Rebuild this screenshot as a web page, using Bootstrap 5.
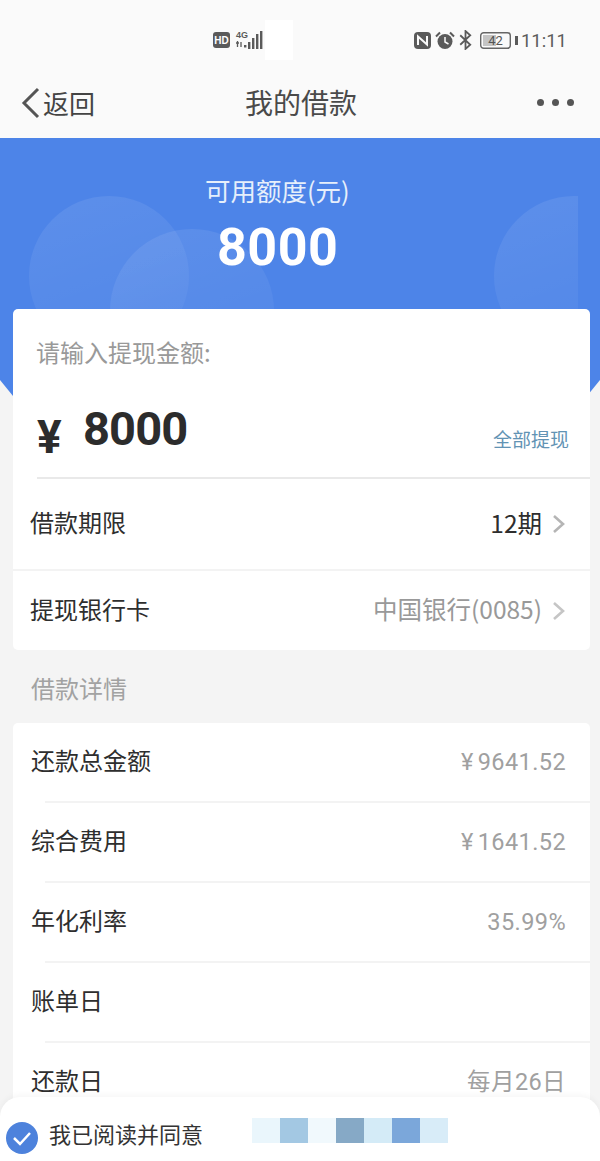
<!DOCTYPE html>
<html lang="zh-CN">
<head>
  <title>我的借款</title>
  <meta charset="utf-8">
  <meta name="viewport" content="width=device-width, initial-scale=1">
  <link href="https://cdn.jsdelivr.net/npm/bootstrap@5.3.2/dist/css/bootstrap.min.css" rel="stylesheet">
  <style>
    html, body { height: 1161px; overflow: hidden; }
    body { background: #f4f4f4; font-family: "Noto Sans CJK SC", "Liberation Sans", sans-serif; color: #2e2e2e; position: relative; }
    .status-line { height: 75px; background: #fafafa; padding: 5px 33px 0 213px; color: #5a5a5a; }
    .status-patch { width: 28px; height: 40px; background: #fff; margin-left: 1px; }
    .status-time { font-family: Roboto, sans-serif; font-size: 18.5px; color: #5c5c5c; margin-left: 3px; padding-top: 3px; }
    .top-nav { height: 63px; background: #fafafa; padding: 0 26px 8px 20px; position: relative; }
    .back-text { font-size: 26px; color: #444; margin-left: 1px; line-height: 1; }
    .nav-title { font-size: 28px; color: #4a4a4a; position: absolute; left: 245px; top: 7px; line-height: 40px; }
    .nav-dot { width: 7px; height: 7px; border-radius: 50%; background: #555; }
    .hero { height: 258px; margin-bottom: -87px; background: #4d84e8; position: relative; overflow: hidden; text-align: center; clip-path: polygon(0 0, 100% 0, 100% 242px, 587px 258px, 13px 258px, 0 242px); }
    .hero-circle { position: absolute; border-radius: 50%; background: linear-gradient(160deg, rgba(255,255,255,.09), rgba(255,255,255,.02)); }
    .hero-label { font-size: 25.5px; color: #e6effb; position: absolute; left: 205px; top: 35px; line-height: 34px; }
    .hero-amount { font-family: Roboto, sans-serif; font-weight: 700; font-size: 52px; color: #fff; position: absolute; left: 217px; top: 79px; line-height: 62px; letter-spacing: .5px; }
    .sheet { margin: 0 10px 0 13px; background: #fff; border-radius: 5px; position: relative; }
    .input-label { font-size: 24px; color: #999; padding: 24px 0 0 23px; line-height: 38px; }
    .amount-line { height: 108px; margin-left: 24px; border-bottom: 2px solid #e9e9e9; padding-right: 21px; position: relative; }
    .yen-big { font-family: Roboto, sans-serif; font-weight: 700; font-size: 46px; color: #2c2c2c; position: absolute; left: 0; top: 41px; line-height: 50px; }
    .amount-big { font-family: Roboto, sans-serif; font-weight: 700; font-size: 47px; color: #2c2c2c; position: absolute; left: 46px; top: 27px; line-height: 62px; letter-spacing: -.9px; }
    .withdraw-all { font-size: 19px; color: #6293b4; margin-top: 53px; line-height: 30px; }
    .form-row { height: 81px; padding: 0 24px 0 17px; font-size: 24px; }
    .form-row-tall { height: 90px; }
    .form-row > span:first-child { padding-bottom: 4px; }
    .form-row + .form-row { border-top: 2px solid #f3f3f3; }
    .row-value { font-size: 24.5px; color: #2e2e2e; margin-right: 2px; padding-bottom: 2px; }
    .row-muted { color: #999; }
    .section-name { font-size: 24px; color: #a2a2a2; margin: 0 0 0 31px; line-height: 76px; height: 73px; }
    .detail-sheet { margin: 0 10px 0 13px; background: #fff; border-radius: 5px; }
    .detail-row { height: 80px; padding: 0 24px 0 18px; position: relative; font-size: 24px; }
    .detail-row > span:first-child { padding-bottom: 6px; }
    .detail-row::after { content: ""; position: absolute; left: 32px; right: 0; bottom: 0; height: 2px; background: #f3f3f3; }
    .detail-row:last-child::after { display: none; }
    .detail-value { font-size: 23.5px; color: #a0a0a0; font-family: Roboto, "Noto Sans CJK SC", sans-serif; letter-spacing: .4px; }
    .detail-value i { font-style: normal; margin-right: 4px; }
    .agree-bar { position: absolute; left: 0; right: 0; bottom: 0; height: 64px; background: #fff; border-radius: 20px 20px 0 0; padding: 12px 0 0 6px; box-shadow: 0 -2px 6px rgba(0,0,0,.04); font-size: 22px; color: #333; }
    .agree-check { margin-top: 6px; }
    .agree-text { margin-left: 11px; margin-right: 49px; padding-bottom: 4px; }
    .blur-box { width: 28px; height: 25px; margin-top: -10px; }
  </style>
</head>
<body>

<div class="status-line d-flex align-items-center">
  <svg width="18" height="16" viewBox="0 0 18 16"><rect width="17" height="16" rx="3" fill="#5a5a5a"/><text x="8.5" y="12" text-anchor="middle" font-family="Liberation Sans" font-weight="700" font-size="10" fill="#fff">HD</text></svg>
  <svg class="ms-1" width="29" height="20" viewBox="0 0 29 20"><text x="1" y="8" font-family="Liberation Sans" font-weight="700" font-size="9" fill="#5a5a5a">4G</text><path d="M1 13h3M2.500 11v6M6 12v5" stroke="#5a5a5a" stroke-width="1.300" fill="none"/><rect x="9" y="15" width="2.400" height="2.500" fill="#5a5a5a"/><rect x="13" y="12" width="2.400" height="7" fill="#5a5a5a"/><rect x="17" y="8" width="2.400" height="11" fill="#5a5a5a"/><rect x="21" y="4" width="2.400" height="15" fill="#5a5a5a"/><rect x="25" y="1" width="2.400" height="18" fill="#5a5a5a"/></svg>
  <div class="status-patch"></div>
  <div class="ms-auto d-flex align-items-center">
    <svg width="17" height="17" viewBox="0 0 17 17"><rect width="17" height="17" rx="4" fill="#5a5a5a"/><path d="M4 13V4.500L13 12.500V4" stroke="#fafafa" stroke-width="2" fill="none"/></svg>
    <svg class="ms-1" width="20" height="19" viewBox="0 0 20 19"><circle cx="10" cy="10.500" r="7.500" fill="#5a5a5a"/><path d="M10 6v5l3.500 2" stroke="#fafafa" stroke-width="1.500" fill="none"/><path d="M1 5.500L5 1.500M19 5.500L15 1.500" stroke="#5a5a5a" stroke-width="2"/></svg>
    <svg class="ms-1" width="13" height="20" viewBox="0 0 12 19"><path d="M1 5l9.500 9-4.500 4V1l4.500 4L1 14" stroke="#5a5a5a" stroke-width="1.700" fill="none"/></svg>
    <div class="d-flex align-items-center ms-2">
      <svg width="31" height="17" viewBox="0 0 31 17"><rect x=".7" y=".7" width="29.600" height="15.600" rx="3" fill="#fafafa" stroke="#666" stroke-width="1.400"/><rect x="3" y="3" width="13" height="11" fill="#c4c4c4"/><text x="15.500" y="13" text-anchor="middle" font-family="Roboto" font-size="13" fill="#555">42</text></svg>
      <svg class="ms-1" width="3" height="9" viewBox="0 0 3 9"><rect width="3" height="9" fill="#5a5a5a"/></svg>
    </div>
    <span class="status-time">11:11</span>
  </div>
</div>

<div class="top-nav d-flex align-items-center">
  <svg width="22" height="32" viewBox="0 0 22 32"><path d="M18 2L4 16l14 14" stroke="#555" stroke-width="3" fill="none"/></svg>
  <span class="back-text">返回</span>
  <span class="nav-title">我的借款</span>
  <div class="ms-auto d-flex gap-2">
    <span class="nav-dot"></span><span class="nav-dot"></span><span class="nav-dot"></span>
  </div>
</div>

<div class="hero">
  <div class="hero-circle" style="left:29px;top:58px;width:160px;height:160px"></div>
  <div class="hero-circle" style="left:110px;top:91px;width:164px;height:164px"></div>
  <div class="hero-circle" style="left:494px;top:58px;width:160px;height:160px;clip-path:inset(0 76px 0 0)"></div>
  <div class="hero-label">可用额度(元)</div>
  <div class="hero-amount">8000</div>
</div>

<div class="sheet">
  <div class="input-label">请输入提现金额:</div>
  <div class="amount-line d-flex justify-content-end align-items-start">
    <span class="yen-big">¥</span>
    <span class="amount-big">8000</span>
    <span class="withdraw-all">全部提现</span>
  </div>
  <div class="form-row form-row-tall d-flex align-items-center justify-content-between">
    <span>借款期限</span>
    <span class="d-flex align-items-center gap-2"><span class="row-value">12期</span>
      <svg width="14" height="20" viewBox="0 0 14 20"><path d="M2 2l9 8-9 8" stroke="#b5b5b5" stroke-width="2.600" fill="none"/></svg></span>
  </div>
  <div class="form-row d-flex align-items-center justify-content-between">
    <span>提现银行卡</span>
    <span class="d-flex align-items-center gap-2"><span class="row-value row-muted">中国银行(0085)</span>
      <svg width="14" height="20" viewBox="0 0 14 20"><path d="M2 2l9 8-9 8" stroke="#c5c5c5" stroke-width="2.600" fill="none"/></svg></span>
  </div>
</div>

<div class="section-name">借款详情</div>

<div class="detail-sheet">
  <div class="detail-row d-flex align-items-center justify-content-between"><span>还款总金额</span><span class="detail-value"><i>¥</i>9641.52</span></div>
  <div class="detail-row d-flex align-items-center justify-content-between"><span>综合费用</span><span class="detail-value"><i>¥</i>1641.52</span></div>
  <div class="detail-row d-flex align-items-center justify-content-between"><span>年化利率</span><span class="detail-value">35.99%</span></div>
  <div class="detail-row d-flex align-items-center justify-content-between"><span>账单日</span><span class="detail-value"></span></div>
  <div class="detail-row d-flex align-items-center justify-content-between"><span>还款日</span><span class="detail-value">每月26日</span></div>
</div>

<div class="agree-bar d-flex align-items-center">
  <svg class="agree-check" width="32" height="36" viewBox="0 0 32 36"><circle cx="16" cy="18" r="16" fill="#4d82dc"/><path d="M8 18l6 6 10-11" stroke="#fff" stroke-width="2.500" fill="none"/></svg>
  <span class="agree-text">我已阅读并同意</span>
  <div class="d-flex">
    <div class="blur-box" style="background:#eaf6fc"></div>
    <div class="blur-box" style="background:#a3c8e3"></div>
    <div class="blur-box" style="background:#f1f9fd"></div>
    <div class="blur-box" style="background:#86a9c6"></div>
    <div class="blur-box" style="background:#d4ebf7"></div>
    <div class="blur-box" style="background:#7ba7da"></div>
    <div class="blur-box" style="background:#d8ecf8"></div>
  </div>
</div>

<script src="https://cdn.jsdelivr.net/npm/bootstrap@5.3.2/dist/js/bootstrap.bundle.min.js"></script>
</body>
</html>
